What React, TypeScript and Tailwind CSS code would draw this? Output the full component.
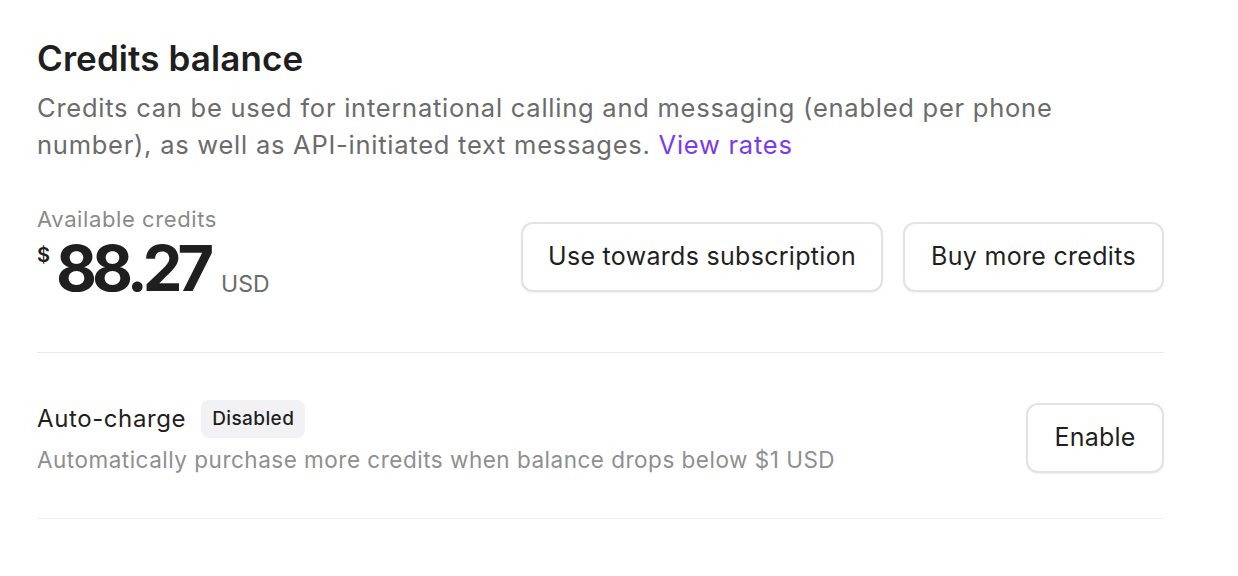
import React from "react";

export default function App() {
  return (
    <div className="min-h-screen bg-white" style={{ fontFamily: "Inter, 'Noto Sans', sans-serif" }}>
      <div className="ml-[37px] w-[1127px] pt-[36px]">
        <h1 className="text-[35px] leading-[44px] font-semibold text-[#1f1f1f] tracking-[0.1px]">Credits balance</h1>
        <p className="mt-[9px] max-w-[1080px] text-[25.5px] leading-[37px] tracking-[0.75px] text-[#6b6b6b]">
          Credits can be used for international calling and messaging (enabled per phone number), as well as API-initiated text messages.{" "}
          <span className="text-[#7c3aed]">View rates</span>
        </p>

        <div className="mt-[42px] flex items-start justify-between pb-[52px] border-b border-[#e8e8ea]">
          <div>
            <div className="text-[22px] leading-[28px] tracking-[0.6px] text-[#8a8a8a]">Available credits</div>
            <div className="flex items-start mt-[4px]">
              <span className="text-[20px] leading-[24px] font-semibold text-[#1f1f1f] mt-[6px] mr-[6px]">$</span>
              <span className="text-[63px] leading-[63px] font-bold text-[#1f1f1f] tracking-[-5px]">88.27</span>
              <span className="ml-[12px] mt-[33px] text-[23px] leading-[28px] text-[#6b6b6b]">USD</span>
            </div>
          </div>
          <div className="flex gap-[20px] mt-[17px]">
            <button className="h-[70px] w-[362px] rounded-[12px] border-2 border-[#e2e2e8] bg-white text-[25px] tracking-[0.3px] text-[#1f1f1f] shadow-[0_1px_2px_rgba(0,0,0,0.06)]">
              Use towards subscription
            </button>
            <button className="h-[70px] w-[261px] rounded-[12px] border-2 border-[#e2e2e8] bg-white text-[25px] tracking-[0.3px] text-[#1f1f1f] shadow-[0_1px_2px_rgba(0,0,0,0.06)]">
              Buy more credits
            </button>
          </div>
        </div>

        <div className="flex items-center justify-between pt-[47px] pb-[43px] border-b border-[#eeeef0]">
          <div>
            <div className="flex items-center gap-[15px]">
              <span className="text-[24px] leading-[32px] tracking-[0.6px] text-[#1f1f1f]">Auto-charge</span>
              <span className="rounded-[8px] bg-[#f2f2f4] px-[11px] h-[38px] flex items-center text-[19px] tracking-[0.4px] font-medium text-[#1f1f1f]">Disabled</span>
            </div>
            <div className="mt-[7px] text-[22.5px] leading-[30px] tracking-[0.5px] text-[#8f8f8f]">
              Automatically purchase more credits when balance drops below $1 USD
            </div>
          </div>
          <button className="h-[70px] w-[138px] rounded-[12px] border-2 border-[#e2e2e8] bg-white text-[25px] tracking-[0.2px] text-[#1f1f1f] shadow-[0_1px_2px_rgba(0,0,0,0.06)]">
            Enable
          </button>
        </div>
      </div>
    </div>
  );
}
